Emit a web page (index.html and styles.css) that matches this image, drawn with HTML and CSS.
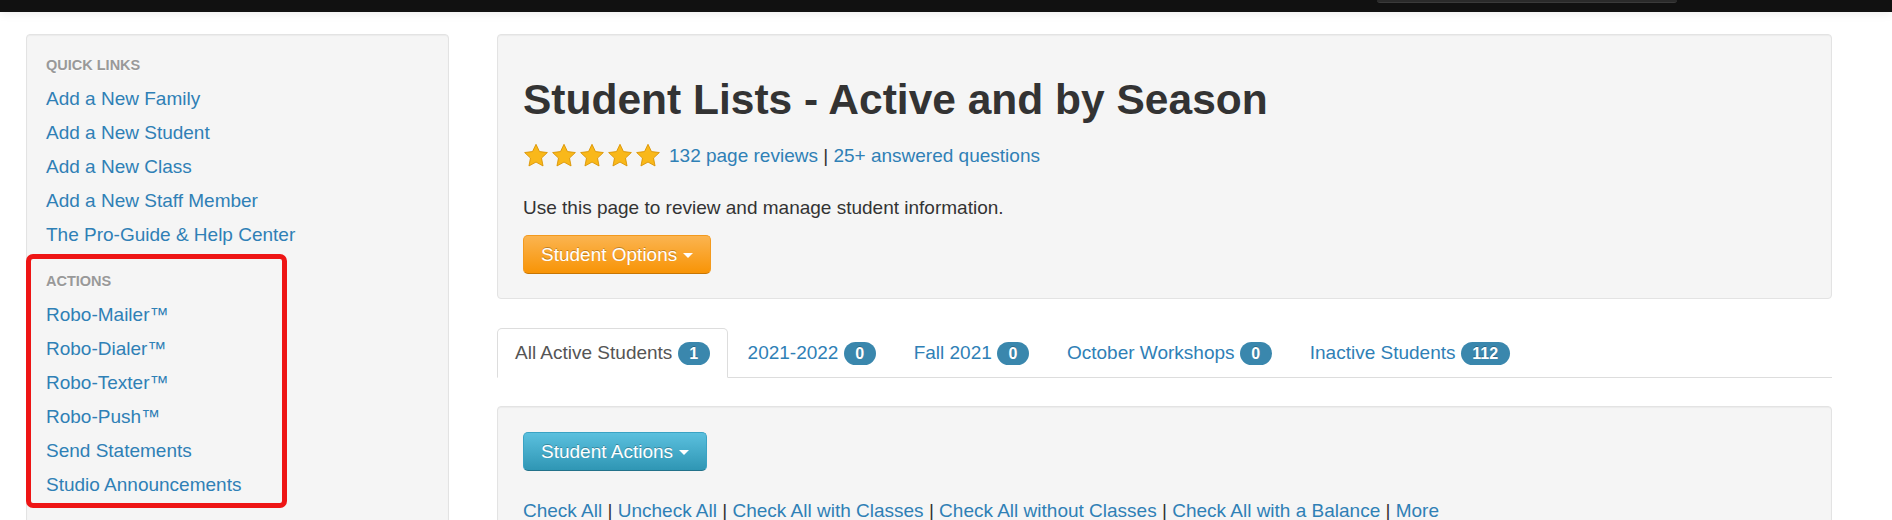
FILE: index.html
```html
<!DOCTYPE html>
<html lang="en">
<head>
<meta charset="utf-8">
<title>Student Lists - Active and by Season</title>
<link rel="stylesheet" href="styles.css">
</head>
<body>
<div class="topbar"><div class="search"></div></div>
<div class="page">
  <aside class="sidebar">
    <ul class="navlist">
      <li class="nav-header">Quick Links</li>
      <li><a href="#">Add a New Family</a></li>
      <li><a href="#">Add a New Student</a></li>
      <li><a href="#">Add a New Class</a></li>
      <li><a href="#">Add a New Staff Member</a></li>
      <li><a href="#">The Pro-Guide &amp; Help Center</a></li>
      <li class="nav-header spaced">Actions</li>
      <li><a href="#">Robo-Mailer™</a></li>
      <li><a href="#">Robo-Dialer™</a></li>
      <li><a href="#">Robo-Texter™</a></li>
      <li><a href="#">Robo-Push™</a></li>
      <li><a href="#">Send Statements</a></li>
      <li><a href="#">Studio Announcements</a></li>
    </ul>
    <div class="highlight"></div>
  </aside>
  <main class="content">
    <section class="well hero">
      <h1>Student Lists - Active and by Season</h1>
      <div class="rating">
        <span class="stars">
          <svg viewBox="0 0 24 24"><path d="M12 1.2l3.2 6.7 7.3.9-5.4 5.1 1.4 7.3L12 17.6l-6.5 3.6 1.4-7.3-5.4-5.1 7.3-.9z"/></svg>
          <svg viewBox="0 0 24 24"><path d="M12 1.2l3.2 6.7 7.3.9-5.4 5.1 1.4 7.3L12 17.6l-6.5 3.6 1.4-7.3-5.4-5.1 7.3-.9z"/></svg>
          <svg viewBox="0 0 24 24"><path d="M12 1.2l3.2 6.7 7.3.9-5.4 5.1 1.4 7.3L12 17.6l-6.5 3.6 1.4-7.3-5.4-5.1 7.3-.9z"/></svg>
          <svg viewBox="0 0 24 24"><path d="M12 1.2l3.2 6.7 7.3.9-5.4 5.1 1.4 7.3L12 17.6l-6.5 3.6 1.4-7.3-5.4-5.1 7.3-.9z"/></svg>
          <svg viewBox="0 0 24 24"><path d="M12 1.2l3.2 6.7 7.3.9-5.4 5.1 1.4 7.3L12 17.6l-6.5 3.6 1.4-7.3-5.4-5.1 7.3-.9z"/></svg>
        </span>
        <span class="rating-text"><a href="#">132 page reviews</a> | <a href="#">25+ answered questions</a></span>
      </div>
      <p class="intro">Use this page to review and manage student information.</p>
      <button class="btn btn-warning" type="button">Student Options<span class="caret"></span></button>
    </section>

    <ul class="tabs">
      <li class="active"><a href="#">All Active Students <span class="badge">1</span></a></li>
      <li><a href="#">2021-2022 <span class="badge">0</span></a></li>
      <li><a href="#">Fall 2021 <span class="badge">0</span></a></li>
      <li><a href="#">October Workshops <span class="badge">0</span></a></li>
      <li><a href="#">Inactive Students <span class="badge">112</span></a></li>
    </ul>

    <section class="well actions">
      <button class="btn btn-info" type="button">Student Actions<span class="caret"></span></button>
      <p class="checks"><a href="#">Check All</a> <span class="sep">|</span> <a href="#">Uncheck All</a> <span class="sep">|</span> <a href="#">Check All with Classes</a> <span class="sep">|</span> <a href="#">Check All without Classes</a> <span class="sep">|</span> <a href="#">Check All with a Balance</a> <span class="sep">|</span> <a href="#">More</a></p>
    </section>
  </main>
</div>
</body>
</html>
```

FILE: styles.css
```css
html, body {
  margin: 0;
  height: 520px;
  overflow: hidden;
}

body {
  font-family: "Liberation Sans", Arial, sans-serif;
  font-size: 19px;
  line-height: 26px;
  color: #333;
  background: #fff;
}

a {
  color: #2f80b6;
  text-decoration: none;
}

.topbar {
  position: relative;
  z-index: 1;
  height: 12px;
  background: #111;
  box-shadow: 0 2px 10px rgba(0, 0, 0, 0.08);
  display: flex;
  justify-content: flex-end;
  padding-right: 215px;
}

.search {
  width: 300px;
  height: 2px;
  background: #2a2a2a;
  border-bottom: 1px solid #3a3a3a;
  border-radius: 0 0 8px 8px;
}

.page {
  display: grid;
  grid-template-columns: 423px 1fr;
  column-gap: 48px;
  align-items: start;
  padding: 22px 60px 0 26px;
}

/* Sidebar */
.sidebar {
  position: relative;
  min-height: 560px;
  padding: 13px 19px;
  background: #f5f5f5;
  border: 1px solid #e3e3e3;
  border-radius: 4px;
  box-shadow: inset 0 1px 1px rgba(0, 0, 0, 0.04);
}

.navlist {
  list-style: none;
  margin: 0;
  padding: 0;
}

.navlist li a {
  display: block;
  padding: 4px 0;
  line-height: 26px;
}

.nav-header {
  padding: 4px 0;
  line-height: 26px;
  font-size: 14.5px;
  font-weight: bold;
  color: #999;
  text-transform: uppercase;
  text-shadow: 0 1px 0 rgba(255, 255, 255, 0.5);
}

.nav-header.spaced {
  margin-top: 12px;
}

.highlight {
  position: absolute;
  left: -1px;
  top: 219px;
  width: 261px;
  height: 254px;
  box-sizing: border-box;
  border: 5px solid #ee1515;
  border-radius: 7px;
}

/* Wells */
.well {
  background: #f5f5f5;
  border: 1px solid #e3e3e3;
  border-radius: 4px;
  box-shadow: inset 0 1px 1px rgba(0, 0, 0, 0.04);
  padding: 25px 25px 24px;
}

.hero h1 {
  margin: 14px 0 0;
  font-size: 42.5px;
  line-height: 52px;
  font-weight: bold;
  color: #333;
}

.rating {
  display: flex;
  align-items: center;
  height: 26px;
  margin-top: 17px;
}

.stars {
  display: flex;
  gap: 2px;
  margin-right: 8px;
}

.stars svg {
  width: 26px;
  height: 26px;
  fill: #f9b81a;
  stroke: #d99200;
  stroke-width: 0.8;
}

.intro {
  margin: 26px 0 14px;
}

/* Buttons */
.btn {
  display: inline-flex;
  align-items: center;
  font-family: inherit;
  font-size: 19px;
  line-height: 25px;
  padding: 6px 17px;
  border: 1px solid;
  border-radius: 5px;
  color: #fff;
  text-shadow: 0 -1px 0 rgba(0, 0, 0, 0.25);
  cursor: pointer;
}

.btn-warning {
  background: linear-gradient(#fbb450, #f89406);
  border-color: #f39a1e #f39a1e #c77604;
}

.btn-info {
  background: linear-gradient(#5bc0de, #2f96b4);
  border-color: #3aa3c4 #3aa3c4 #23728a;
}

.caret {
  display: inline-block;
  width: 0;
  height: 0;
  margin-left: 6px;
  margin-top: 2px;
  border-top: 5px solid #fff;
  border-left: 5px solid transparent;
  border-right: 5px solid transparent;
}

/* Tabs */
.tabs {
  list-style: none;
  display: flex;
  margin: 29px 0 28px;
  padding: 0;
  border-bottom: 1px solid #ddd;
}

.tabs li {
  margin-bottom: -1px;
}

.tabs a {
  display: block;
  margin-right: 2px;
  padding: 11px 17px;
  line-height: 26px;
  border: 1px solid transparent;
  border-radius: 5px 5px 0 0;
}

.tabs .active a {
  color: #555;
  background: #fff;
  border-color: #ddd #ddd transparent;
}

.badge {
  display: inline-block;
  padding: 0 11.5px;
  font-size: 16px;
  font-weight: bold;
  line-height: 23px;
  color: #fff;
  background: #3a87ad;
  border-radius: 12px;
  text-shadow: 0 -1px 0 rgba(0, 0, 0, 0.25);
}

.checks {
  margin: 27px 0 0;
}

.sep {
  color: #333;
}
```
